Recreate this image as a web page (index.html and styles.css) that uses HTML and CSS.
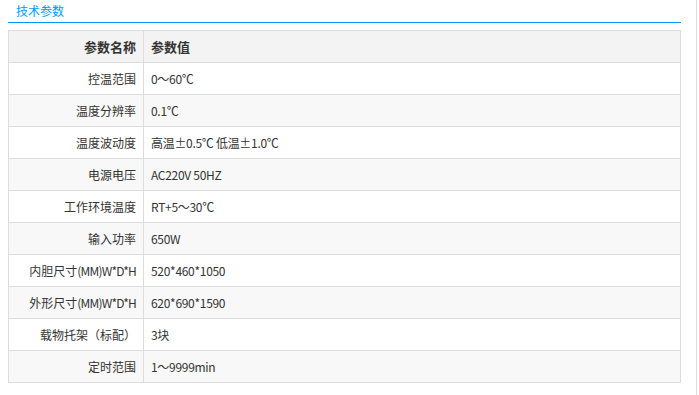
FILE: index.html
```html
<!DOCTYPE html>
<html lang="zh">
<head>
<meta charset="utf-8">
<title>技术参数</title>
<link rel="stylesheet" href="styles.css">
</head>
<body>
<div class="page">
  <div class="main">
    <div class="tabbar"><span class="tab">技术参数</span></div>
    <table class="params">
      <tr class="head"><th class="k">参数名称</th><th class="v">参数值</th></tr>
      <tr><td class="k">控温范围</td><td class="v">0～60℃</td></tr>
      <tr class="alt"><td class="k">温度分辨率</td><td class="v">0.1℃</td></tr>
      <tr><td class="k">温度波动度</td><td class="v">高温±0.5℃ 低温±1.0℃</td></tr>
      <tr class="alt"><td class="k">电源电压</td><td class="v">AC220V 50HZ</td></tr>
      <tr><td class="k">工作环境温度</td><td class="v">RT+5～30℃</td></tr>
      <tr class="alt"><td class="k">输入功率</td><td class="v">650W</td></tr>
      <tr><td class="k">内胆尺寸<span class="lat">(MM)W*D*H</span></td><td class="v">520*460*1050</td></tr>
      <tr class="alt"><td class="k">外形尺寸<span class="lat">(MM)W*D*H</span></td><td class="v">620*690*1590</td></tr>
      <tr><td class="k">载物托架（标配）</td><td class="v">3块</td></tr>
      <tr class="alt"><td class="k">定时范围</td><td class="v">1～9999min</td></tr>
    </table>
  </div>
</div>
</body>
</html>
```
FILE: styles.css
```css
html, body {
  margin: 0;
  padding: 0;
  background: #fff;
}
body {
  font-family: "Noto Sans CJK SC", "Noto Sans", sans-serif;
  font-size: 12px;
  color: #333;
}
.page {
  width: 696px;
  height: 395px;
  border-right: 1px solid #ddd;
  box-sizing: content-box;
}
.main {
  margin-left: 8px;
  width: 673px;
}
.tabbar {
  border-bottom: 1px solid #0099ff;
  box-sizing: border-box;
  height: 23px;
  padding-left: 8px;
  display: flex;
  align-items: center;
}
.tab {
  color: #0099ff;
  font-size: 12px;
  line-height: 14px;
  margin-top: -1px;
}
.params {
  margin-top: 7px;
  width: 673px;
  border-collapse: collapse;
  border: 1px solid #ddd;
}
.params th, .params td {
  border: 1px solid #ddd;
  height: 32px;
  padding: 0 7px;
  box-sizing: border-box;
  line-height: 14px;
  vertical-align: middle;
}
.params .k {
  width: 135px;
  text-align: right;
}
.params .v {
  text-align: left;
  letter-spacing: -0.3px;
}
.lat {
  letter-spacing: -0.8px;
}
.params .head th {
  background: #f3f3f3;
  font-weight: bold;
  font-size: 13px;
  color: #333;
  letter-spacing: 0;
}
.params tr.alt td {
  background: #f8f8f8;
}
```
